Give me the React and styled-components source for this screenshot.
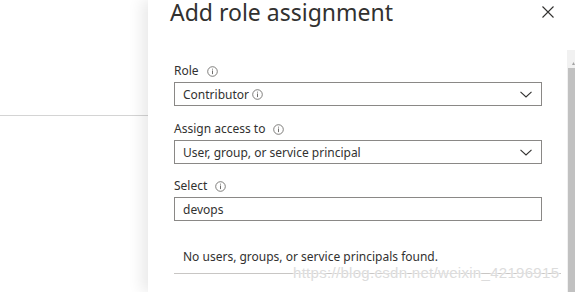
import React from "react";
import styled, { createGlobalStyle } from "styled-components";

const Global = createGlobalStyle`
  html, body { margin: 0; padding: 0; background: #fff; }
  body { width: 575px; height: 292px; overflow: hidden; font-family: "Noto Sans", "Open Sans", sans-serif; color: #323130; }
`;

const Page = styled.div`
  display: flex;
  width: 575px;
  height: 292px;
  overflow: hidden;
`;

const Backdrop = styled.div`
  width: 148px;
  flex: none;
`;

const BackdropTop = styled.div`
  height: 115px;
  border-bottom: 1px solid #d4d4d4;
`;

const Panel = styled.section`
  flex: 1;
  display: flex;
  flex-direction: column;
  background: #fff;
  box-shadow: -6px 0 14px rgba(0, 0, 0, 0.09);
  position: relative;
  z-index: 1;
`;

const Header = styled.header`
  height: 50px;
  display: flex;
  align-items: flex-start;
  justify-content: space-between;
  padding: 0 21px 0 22px;
  flex: none;
`;

const Title = styled.h1`
  margin: 0;
  font-family: "Noto Sans", sans-serif;
  font-weight: 400;
  font-size: 23px;
  line-height: 24px;
  color: #323130;
  letter-spacing: 0;
`;

const Close = styled.button`
  border: 0;
  background: none;
  padding: 0;
  margin-top: 6px;
  width: 12px;
  height: 12px;
  display: flex;
`;

const Body = styled.div`
  flex: 1;
  display: flex;
  min-height: 0;
`;

const Content = styled.div`
  flex: 1;
  padding: 13px 25px 0 26px;
  display: flex;
  flex-direction: column;
`;

const Scrollbar = styled.div`
  width: 8px;
  flex: none;
  background: #f1f1f1;
  display: flex;
  flex-direction: column;
`;

const ScrollArrow = styled.div`
  height: 18px;
  display: flex;
  justify-content: flex-end;
  align-items: flex-end;
  padding-bottom: 3px;
  box-sizing: border-box;
`;

const Thumb = styled.div`
  flex: 1;
  margin-left: 1px;
  background: #c1c1c1;
`;

const Field = styled.div`
  display: flex;
  flex-direction: column;
  margin-bottom: ${(p) => p.$gap}px;
`;

const Label = styled.label`
  display: flex;
  align-items: center;
  gap: 8px;
  font-size: 12px;
  line-height: 16px;
  height: 16px;
  margin-bottom: 3px;
  color: #323130;
`;

const Box = styled.div`
  height: 24px;
  box-sizing: border-box;
  border: 1px solid #8a8886;
  display: flex;
  align-items: center;
  padding: 0 9px 0 8px;
  font-size: 12px;
  color: #323130;
`;

const BoxText = styled.span`
  flex: 1;
  display: flex;
  align-items: center;
  gap: 3px;
`;

const Message = styled.div`
  margin-top: 28px;
  padding: 0 0 0 9px;
  font-size: 12px;
  line-height: 16px;
  height: 24px;
  border-bottom: 1px solid #c8c6c4;
  margin-right: -19px;
`;

const Watermark = styled.div`
  position: absolute;
  left: 145px;
  top: 264px;
  font-family: "Liberation Sans", Arial, sans-serif;
  font-size: 15px;
  color: #dcdcdc;
  text-shadow: 0 0 2px #fff, 0 0 2px #fff;
  letter-spacing: 0.3px;
  white-space: nowrap;
`;

const Info = () => (
  <svg width="11" height="11" viewBox="0 0 11 11">
    <circle cx="5.5" cy="5.5" r="4.8" fill="none" stroke="#605e5c" strokeWidth="0.8" />
    <rect x="5.05" y="4.5" width="0.9" height="3.6" fill="#605e5c" />
    <rect x="5.05" y="2.7" width="0.9" height="0.9" fill="#605e5c" />
  </svg>
);

const Chevron = () => (
  <svg width="12" height="7" viewBox="0 0 12 7">
    <path d="M0.5 0.8 L6 6 L11.5 0.8" fill="none" stroke="#323130" strokeWidth="1.1" />
  </svg>
);

export default function App() {
  return (
    <>
      <Global />
      <Page>
        <Backdrop>
          <BackdropTop />
        </Backdrop>
        <Panel>
          <Header>
            <Title>Add role assignment</Title>
            <Close aria-label="Close">
              <svg width="12" height="12" viewBox="0 0 12 12">
                <path d="M0.5 0.5 L11.5 11.5 M11.5 0.5 L0.5 11.5" stroke="#323130" strokeWidth="1.1" />
              </svg>
            </Close>
          </Header>
          <Body>
            <Content>
              <Field $gap={15}>
                <Label>Role <Info /></Label>
                <Box>
                  <BoxText>Contributor <Info /></BoxText>
                  <Chevron />
                </Box>
              </Field>
              <Field $gap={14}>
                <Label>Assign access to <Info /></Label>
                <Box>
                  <BoxText>User, group, or service principal</BoxText>
                  <Chevron />
                </Box>
              </Field>
              <Field $gap={0}>
                <Label>Select <Info /></Label>
                <Box>
                  <BoxText>devops</BoxText>
                </Box>
              </Field>
              <Message>No users, groups, or service principals found.</Message>
            </Content>
            <Scrollbar>
              <ScrollArrow>
                <svg width="3" height="3" viewBox="0 0 3 3"><path d="M0 3 L1.5 0 L3 3Z" fill="#a3a3a3" /></svg>
              </ScrollArrow>
              <Thumb />
            </Scrollbar>
          </Body>
          <Watermark>https://blog.csdn.net/weixin_42196915</Watermark>
        </Panel>
      </Page>
    </>
  );
}
